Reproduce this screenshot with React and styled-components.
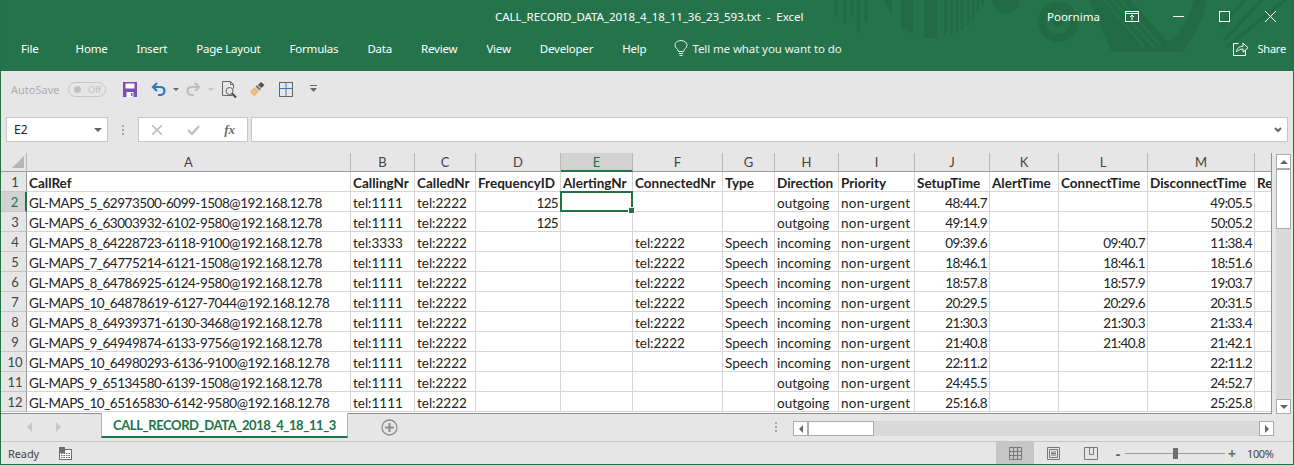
import React from 'react'
import styled, { createGlobalStyle } from 'styled-components'

const GREEN = '#217346'
const BANNER = '#25734a'
const DECOR = '#226a42'
const UI_FONT = '"Noto Sans", "Open Sans", sans-serif'
const CELL_FONT = 'Lato, "Noto Sans", sans-serif'

const GlobalStyle = createGlobalStyle`
  html, body { margin: 0; padding: 0; background: #e6e6e6; }
  * { box-sizing: border-box; }
`

const Window = styled.div`
  position: relative;
  width: 1294px;
  height: 465px;
  overflow: hidden;
  display: flex;
  flex-direction: column;
  background: #e6e6e6;
  border-left: 1px solid ${GREEN};
  border-right: 1px solid ${GREEN};
  border-bottom: 1px solid ${GREEN};
  font-family: ${UI_FONT};
  color: #222;
`

const Banner = styled.div`
  position: relative;
  height: 71px;
  flex: none;
  margin-left: -1px;
  margin-right: -1px;
  background: ${BANNER};
  color: #fff;
  display: flex;
  flex-direction: column;
`

const Decor = styled.svg`
  position: absolute;
  top: 0;
  left: 0;
`

const TitleRow = styled.div`
  position: relative;
  height: 33px;
  flex: none;
  display: flex;
  align-items: center;
`

const Title = styled.div`
  position: absolute;
  left: 495px;
  top: 8px;
  font-size: 11.5px;
  line-height: 18px;
  white-space: pre;
  letter-spacing: -0.05px;
`

const Account = styled.div`
  flex: none;
  margin-left: 1047px;
  width: 62px;
  font-size: 11.5px;
`

const WinButton = styled.div`
  flex: none;
  width: 46px;
  display: flex;
  justify-content: center;
`

const TabRow = styled.div`
  position: relative;
  display: flex;
  align-items: center;
  height: 30px;
  padding-left: 21px;
  font-size: 11.5px;
  letter-spacing: -0.2px;
`

const RibbonTab = styled.div`
  margin-right: ${p => (p.$first ? 37 : 29)}px;
  white-space: nowrap;
`

const TellMe = styled.div`
  display: flex;
  align-items: center;
  gap: 4px;
  margin-left: -1px;
  white-space: nowrap;
  opacity: 0.92;
  letter-spacing: -0.1px;
`

const Share = styled.div`
  margin-left: auto;
  margin-right: 8px;
  display: flex;
  align-items: center;
  gap: 8px;
  font-size: 11px;
`

const Qat = styled.div`
  height: 36px;
  flex: none;
  display: flex;
  align-items: center;
  padding-left: 10px;
`

const AutoSave = styled.span`
  font-size: 11px;
  color: #adadad;
  width: 57px;
`

const Toggle = styled.div`
  width: 38px;
  height: 15px;
  border: 1px solid #c6c6c6;
  border-radius: 8px;
  display: flex;
  align-items: center;
  padding-left: 5px;
  gap: 7px;
  font-size: 9px;
  color: #c0c0c0;
`

const ToggleDot = styled.i`
  display: block;
  width: 7px;
  height: 7px;
  border-radius: 50%;
  background: #c0c0c0;
`

const QatIcon = styled.div`
  display: flex;
  align-items: center;
  width: ${p => p.$w}px;
  margin-left: ${p => p.$ml || 0}px;
`

const FormulaRow = styled.div`
  height: 46px;
  flex: none;
  display: flex;
  padding: 10px 5px 11px 5px;
`

const NameBox = styled.div`
  width: 102px;
  background: #fff;
  border: 1px solid #c6c6c6;
  display: flex;
  align-items: center;
  justify-content: space-between;
  padding: 0 5px 0 7px;
  font-size: 12px;
`

const Grip = styled.div`
  width: 30px;
  display: flex;
  flex-direction: column;
  align-items: center;
  justify-content: center;
  gap: 2px;
`

const GripDot = styled.i`
  display: block;
  width: 2px;
  height: 2px;
  background: #a6a6a6;
`

const FxBox = styled.div`
  width: 110px;
  background: #fff;
  border: 1px solid #c6c6c6;
  display: flex;
  align-items: center;
  justify-content: space-between;
  padding: 0 12px 0 13px;
`

const FxGlyph = styled.span`
  font-family: "Liberation Serif", serif;
  font-style: italic;
  font-weight: 700;
  font-size: 13px;
  color: #6e6e6e;
`

const FormulaInput = styled.div`
  flex: 1;
  margin-left: 3px;
  background: #fff;
  border: 1px solid #c6c6c6;
  display: flex;
  align-items: center;
  justify-content: flex-end;
  padding-right: 5px;
`

const SheetArea = styled.div`
  height: 261px;
  flex: none;
  display: flex;
`

const Grid = styled.div`
  width: 1271px;
  flex: none;
  display: grid;
  grid-template-columns: 26px 324px 64px 61px 85px 72px 90px 52px 64px 76px 75px 69px 89px 107px 18px;
  grid-auto-rows: 20px;
  align-content: start;
  border-bottom: 1px solid #8f8f8f;
  border-right: 1px solid #8f8f8f;
  overflow: hidden;
  background: #fff;
`

const Corner = styled.div`
  position: relative;
  height: 19px;
  background: #e6e6e6;
  border-bottom: 1px solid #9b9b9b;
  border-right: 1px solid #b8b8b8;
`

const CornerMark = styled.i`
  position: absolute;
  right: 2px;
  bottom: 3px;
  border-style: solid;
  border-width: 0 0 12px 12px;
  border-color: transparent transparent #b5b5b5 transparent;
`

const ColHead = styled.div`
  height: 19px;
  background: ${p => (p.$active ? '#d2d2d2' : '#e6e6e6')};
  border-bottom: ${p => (p.$active ? `2px solid ${GREEN}` : '1px solid #9b9b9b')};
  border-right: 1px solid #b8b8b8;
  color: ${p => (p.$active ? GREEN : '#444')};
  font-size: 13px;
  font-family: ${CELL_FONT};
  display: flex;
  align-items: center;
  justify-content: center;
`

const RowHead = styled.div`
  height: 20px;
  margin-top: -1px;
  background: ${p => (p.$active ? '#d2d2d2' : '#e6e6e6')};
  border-bottom: 1px solid #c6c6c6;
  border-right: ${p => (p.$active ? `2px solid ${GREEN}` : '1px solid #9b9b9b')};
  color: ${p => (p.$active ? GREEN : '#444')};
  font-family: ${CELL_FONT};
  font-size: 13px;
  display: flex;
  align-items: center;
  justify-content: center;
  padding-left: 3px;
`

const Cell = styled.div`
  position: relative;
  z-index: ${p => (p.$raised ? 1 : 'auto')};
  height: 20px;
  margin-top: -1px;
  border-right: 1px solid #d6d6d6;
  border-bottom: 1px solid #d6d6d6;
  font-family: ${CELL_FONT};
  font-size: 13.5px;
  font-weight: ${p => (p.$bold ? 700 : 400)};
  letter-spacing: ${p => p.$fit || 0}px;
  color: #222;
  line-height: 22px;
  padding: 0 2px;
  white-space: nowrap;
  text-align: ${p => (p.$right ? 'right' : 'left')};
  overflow: ${p => (p.$bold ? 'hidden' : 'visible')};
`

const Selection = styled.div`
  position: absolute;
  left: -1px;
  top: -1px;
  right: -1px;
  bottom: -1px;
  border: 2px solid ${GREEN};
`

const Handle = styled.i`
  position: absolute;
  right: -4px;
  bottom: -4px;
  width: 7px;
  height: 7px;
  background: ${GREEN};
  border: 1px solid #fff;
`

const VScroll = styled.div`
  width: 15px;
  margin-left: 4px;
  margin-top: 1px;
  display: flex;
  flex-direction: column;
  background: #d9d9d9;
`

const ScrollButton = styled.div`
  width: ${p => p.$w}px;
  height: ${p => p.$h}px;
  flex: none;
  background: #fff;
  border: 1px solid #ababab;
  display: flex;
  align-items: center;
  justify-content: center;
`

const VThumb = styled.div`
  height: 60px;
  flex: none;
  background: #fff;
  border: 1px solid #ababab;
`

const Track = styled.div`
  flex: 1;
`

const TabBar = styled.div`
  height: 28px;
  flex: none;
  display: flex;
  align-items: flex-start;
  border-bottom: 1px solid #c6c6c6;
`

const NavArrows = styled.div`
  flex: none;
  width: 100px;
  height: 26px;
  display: flex;
  align-items: center;
  padding-left: 26px;
  gap: 24px;
`

const SheetTab = styled.div`
  flex: none;
  width: 247px;
  height: 25px;
  background: #fff;
  border-left: 1px solid #b0b0b0;
  border-right: 1px solid #b0b0b0;
  border-bottom: 2px solid ${GREEN};
  margin-top: -1px;
  display: flex;
  align-items: center;
  justify-content: center;
  color: ${GREEN};
  font-family: ${CELL_FONT};
  font-weight: 700;
  font-size: 13px;
  letter-spacing: -0.4px;
  white-space: nowrap;
`

const AddSheet = styled.div`
  flex: none;
  width: 82px;
  height: 26px;
  display: flex;
  align-items: center;
  justify-content: center;
`

const Splitter = styled.div`
  flex: none;
  width: 363px;
  height: 26px;
  display: flex;
  align-items: center;
  justify-content: flex-end;
  padding-right: 16px;
`

const SplitDots = styled.div`
  display: flex;
  flex-direction: column;
  gap: 2px;
`

const HScroll = styled.div`
  flex: none;
  width: 481px;
  height: 15px;
  margin-top: 7px;
  background: #d9d9d9;
  display: flex;
`

const HThumb = styled.div`
  width: 66px;
  background: #fff;
  border: 1px solid #ababab;
`

const StatusBar = styled.div`
  flex: 1;
  display: flex;
  align-items: stretch;
  font-size: 11px;
  color: #444;
`

const Ready = styled.div`
  width: 58px;
  padding-left: 7px;
  display: flex;
  align-items: center;
  letter-spacing: -0.1px;
`

const StatusIcon = styled.div`
  flex: none;
  display: flex;
  align-items: center;
  width: ${p => p.$w}px;
  justify-content: ${p => (p.$center ? 'center' : 'flex-start')};
  background: ${p => (p.$active ? '#c6c6c6' : 'transparent')};
`

const ZoomSlider = styled.div`
  position: relative;
  width: 100px;
  height: 1px;
  align-self: center;
  background: #9c9c9c;
  margin: 0 1px;
`

const ZoomThumb = styled.i`
  position: absolute;
  left: 48px;
  top: -5px;
  width: 5px;
  height: 11px;
  background: #6f6f6f;
`

const ZoomSign = styled.div`
  flex: none;
  width: 12px;
  margin-left: ${p => p.$ml || 0}px;
  display: flex;
  align-items: center;
  justify-content: center;
  font-size: 14px;
  font-weight: 700;
  color: #666;
`

const ZoomValue = styled.div`
  margin-left: 9px;
  display: flex;
  align-items: center;
  letter-spacing: -0.4px;
`

const Arrow = ({ dir = 'down', color = '#666', size = 4 }) => {
  const pts = {
    down: `0,0 ${size * 2},0 ${size},${size}`,
    up: `0,${size} ${size * 2},${size} ${size},0`,
    left: `${size},0 ${size},${size * 2} 0,${size}`,
    right: `0,0 0,${size * 2} ${size},${size}`
  }[dir]
  const horizontal = dir === 'left' || dir === 'right'
  return (
    <svg width={horizontal ? size : size * 2} height={horizontal ? size * 2 : size}>
      <polygon points={pts} fill={color} />
    </svg>
  )
}

const BannerDecor = () => (
  <Decor width="1294" height="71" fill="none" stroke={DECOR}>
    <path d="M836 0v17M844.5 0v24M852 0v17M858.5 0v33M866 0v22" strokeWidth="3" />
    <path d="M883 0h9v15z" fill={DECOR} stroke="none" />
    <path d="M901 0h12v34l-12-6z" fill={DECOR} stroke="none" />
    <path d="M924 0h13v38h-13z" fill={DECOR} stroke="none" />
    <path d="M945.5 0v36M951.5 0v35M957 0v32M962 0v29M968 0v26M973 0v22M978 0v13M982.5 0v6" strokeWidth="2.4" />
    <path d="M992 0a13.5 13.5 0 0 0 27 0z" fill={DECOR} stroke="none" />
    <circle cx="1058" cy="22" r="16" strokeWidth="8" />
    <circle cx="1058" cy="22" r="5" fill={DECOR} stroke="none" />
    <path d="M1089 0l23 52h70q18-22 25-52h-13q-6 28-26 42L1130 0z" fill={DECOR} stroke="none" />
    <path d="M1104 0l40 47M1112 0l42 47M1121 0l40 46" strokeWidth="2" stroke={BANNER} />
    <path d="M1245 0l-23 25M1262 0l-38 40M1285 0l-58 47" strokeWidth="3.5" />
  </Decor>
)

const RestoreIcon = () => (
  <svg width="14" height="11" stroke="#fff" fill="none">
    <rect x="0.5" y="0.5" width="13" height="10" />
    <path d="M0 2.5h14M7 9.5V4M5 6l2-2 2 2" />
  </svg>
)

const Bulb = () => (
  <svg width="14" height="17" viewBox="0 0 14 17" fill="none" stroke="#fff">
    <path d="M4.5 11.5C4.2 9 1 8 1 5.2 1 2.4 3.6.6 7 .6s6 1.8 6 4.6c0 2.8-3.2 3.8-3.5 6.3z" />
    <path d="M5 13.5h4M5.5 15.5h3" />
  </svg>
)

const ShareIcon = () => (
  <svg width="16" height="15" viewBox="0 0 16 15" fill="none" stroke="#fff">
    <path d="M5.5 2.5H.5v12h12v-5" />
    <path d="M3.5 11c.3-4 3-5.7 6.5-5.7V2l5 4.8-5 4.4V8C7.5 8 5 9 3.5 11z" />
  </svg>
)

const SaveIcon = () => (
  <svg width="14" height="15" viewBox="0 0 14 15">
    <path d="M0 0h14v15H0z" fill="#7a4fae" />
    <path d="M2.5 1.5h9v5h-9z" fill="#fff" />
    <path d="M3.5 10h7v5h-7z" fill="#fff" />
    <path d="M8 11h1.5v3H8z" fill="#7a4fae" />
  </svg>
)

const UndoIcon = ({ color, flip }) => (
  <svg width="15" height="14" viewBox="0 0 15 14" fill="none" stroke={color} strokeWidth="2.2"
    style={flip ? { transform: 'scaleX(-1)' } : undefined}>
    <path d="M6 1L2 5l4 4" />
    <path d="M2.5 5H9c3 0 4.5 1.8 4.5 4S11.5 13 9 13H7" />
  </svg>
)

const PreviewIcon = () => (
  <svg width="16" height="17" viewBox="0 0 16 17" fill="none" stroke="#666">
    <path d="M10 14.5H.5V.5h8l3 3v4" />
    <path d="M8.5.5v3h3" />
    <circle cx="7.5" cy="10" r="3.5" />
    <path d="M10 12.5l4 4" strokeWidth="2" stroke="#444" />
  </svg>
)

const BrushIcon = () => (
  <svg width="16" height="14" viewBox="0 0 16 14">
    <path d="M1 9l5-4 4 4-4 5c-2-.3-4-2.3-5-5z" fill="#eabd78" />
    <path d="M6.5 4.5l4 4 1.5-1.5-4-4z" fill="#777" />
    <path d="M9 3l3-3 3.5 3-3 3z" fill="#555" />
  </svg>
)

const BordersIcon = () => (
  <svg width="14" height="15" viewBox="0 0 14 15" fill="none">
    <rect x="0.5" y="0.5" width="13" height="14" stroke="#666" />
    <path d="M7 .5v14" stroke="#777" />
    <path d="M0.5 6.5h13" stroke="#2b7cd3" />
  </svg>
)

const CustomizeIcon = () => (
  <svg width="7" height="8" viewBox="0 0 7 8">
    <path d="M0 .5h7" stroke="#666" />
    <path d="M0 3h7L3.5 7z" fill="#666" />
  </svg>
)

const CancelIcon = () => (
  <svg width="10" height="10" stroke="#bdbdbd" strokeWidth="1.6">
    <path d="M0 0l10 10M10 0L0 10" />
  </svg>
)

const CheckIcon = () => (
  <svg width="13" height="10" fill="none" stroke="#bdbdbd" strokeWidth="2.2">
    <path d="M1 5l4 4 7-8" />
  </svg>
)

const Chevron = () => (
  <svg width="8" height="6" fill="none" stroke="#666" strokeWidth="2">
    <path d="M1 1l3 3 3-3" />
  </svg>
)

const PlusCircle = () => (
  <svg width="17" height="17" fill="none" stroke="#8c8c8c">
    <circle cx="8.5" cy="8.5" r="7.5" strokeWidth="1.3" />
    <path d="M8.5 4v9M4 8.5h9" strokeWidth="2" />
  </svg>
)

const MacroIcon = () => (
  <svg width="13" height="13" viewBox="0 0 13 13">
    <rect x="0.5" y="2.5" width="12" height="10" fill="#fff" stroke="#6e6e6e" />
    <rect x="0" y="0" width="6" height="6" fill="#6e6e6e" />
    <path d="M2 6.5h9M2 8.5h9M2 10.5h9" stroke="#6e6e6e" strokeDasharray="1.5 1" />
  </svg>
)

const NormalView = () => (
  <svg width="13" height="13" stroke="#777" fill="none">
    <path d="M.5.5h12v12H.5zM4.5.5v12M8.5.5v12M.5 4.5h12M.5 8.5h12" />
  </svg>
)

const PageView = () => (
  <svg width="13" height="13" stroke="#777" fill="none">
    <path d="M.5.5h12v12H.5z" />
    <path d="M2.5 2.5h8v8h-8zM4 5h5M4 6.5h5M4 8h5" />
  </svg>
)

const BreakView = () => (
  <svg width="14" height="13" stroke="#777" fill="none">
    <path d="M.5.5h13v12H.5zM5.5.5v7h4V.5" />
  </svg>
)

const columns = ['A', 'B', 'C', 'D', 'E', 'F', 'G', 'H', 'I', 'J', 'K', 'L', 'M', '']

const header = ['CallRef', 'CallingNr', 'CalledNr', 'FrequencyID', 'AlertingNr', 'ConnectedNr', 'Type', 'Direction', 'Priority', 'SetupTime', 'AlertTime', 'ConnectTime', 'DisconnectTime', 'Re']

// Lato's digits run wider than the sheet font's, so number columns get tightened
const TIME_FIT = -0.55

// ref, calling, freq, connected, type, direction, setup, connect, disconnect
const records = [
  ['GL-MAPS_5_62973500-6099-1508', 'tel:1111', '125', '', '', 'outgoing', '48:44.7', '', '49:05.5'],
  ['GL-MAPS_6_63003932-6102-9580', 'tel:1111', '125', '', '', 'outgoing', '49:14.9', '', '50:05.2'],
  ['GL-MAPS_8_64228723-6118-9100', 'tel:3333', '', 'tel:2222', 'Speech', 'incoming', '09:39.6', '09:40.7', '11:38.4'],
  ['GL-MAPS_7_64775214-6121-1508', 'tel:1111', '', 'tel:2222', 'Speech', 'incoming', '18:46.1', '18:46.1', '18:51.6'],
  ['GL-MAPS_8_64786925-6124-9580', 'tel:1111', '', 'tel:2222', 'Speech', 'incoming', '18:57.8', '18:57.9', '19:03.7'],
  ['GL-MAPS_10_64878619-6127-7044', 'tel:1111', '', 'tel:2222', 'Speech', 'incoming', '20:29.5', '20:29.6', '20:31.5'],
  ['GL-MAPS_8_64939371-6130-3468', 'tel:1111', '', 'tel:2222', 'Speech', 'incoming', '21:30.3', '21:30.3', '21:33.4'],
  ['GL-MAPS_9_64949874-6133-9756', 'tel:1111', '', 'tel:2222', 'Speech', 'incoming', '21:40.8', '21:40.8', '21:42.1'],
  ['GL-MAPS_10_64980293-6136-9100', 'tel:1111', '', '', 'Speech', 'incoming', '22:11.2', '', '22:11.2'],
  ['GL-MAPS_9_65134580-6139-1508', 'tel:1111', '', '', '', 'outgoing', '24:45.5', '', '24:52.7'],
  ['GL-MAPS_10_65165830-6142-9580', 'tel:1111', '', '', '', 'outgoing', '25:16.8', '', '25:25.8']
]

const ribbonTabs = ['Home', 'Insert', 'Page Layout', 'Formulas', 'Data', 'Review', 'View', 'Developer', 'Help']

const renderRecord = (r, i) => {
  const row = i + 2
  const cells = [
    { v: r[0] + '@192.168.12.78', fit: -0.47 }, { v: r[1] }, { v: 'tel:2222' },
    { v: r[2], right: true, fit: -0.7 },
    { v: '', selected: i === 0 }, { v: r[3] }, { v: r[4] }, { v: r[5] },
    { v: 'non-urgent', fit: 0.3 },
    { v: r[6], right: true, fit: TIME_FIT }, { v: '' },
    { v: r[7], right: true, fit: TIME_FIT }, { v: r[8], right: true, fit: TIME_FIT }, { v: '' }
  ]
  return (
    <React.Fragment key={row}>
      <RowHead $active={row === 2}>{row}</RowHead>
      {cells.map((c, k) => (
        <Cell key={k} $right={c.right} $fit={c.fit} $raised={c.selected}>
          {c.v}
          {c.selected && <Selection><Handle /></Selection>}
        </Cell>
      ))}
    </React.Fragment>
  )
}

export default function App() {
  return (
    <Window>
      <GlobalStyle />
      <Banner>
        <BannerDecor />
        <TitleRow>
          <Title>CALL_RECORD_DATA_2018_4_18_11_36_23_593.txt  -  Excel</Title>
          <Account>Poornima</Account>
          <WinButton><RestoreIcon /></WinButton>
          <WinButton>
            <svg width="11" height="11" stroke="#fff"><path d="M0 5.5h11" /></svg>
          </WinButton>
          <WinButton>
            <svg width="11" height="11" stroke="#fff" fill="none"><rect x=".5" y=".5" width="10" height="10" /></svg>
          </WinButton>
          <WinButton>
            <svg width="11" height="11" stroke="#fff"><path d="M0 0l11 11M11 0L0 11" /></svg>
          </WinButton>
        </TitleRow>
        <TabRow>
          <RibbonTab $first>File</RibbonTab>
          {ribbonTabs.map(t => <RibbonTab key={t}>{t}</RibbonTab>)}
          <TellMe><Bulb />Tell me what you want to do</TellMe>
          <Share><ShareIcon />Share</Share>
        </TabRow>
      </Banner>

      <Qat>
        <AutoSave>AutoSave</AutoSave>
        <Toggle><ToggleDot />Off</Toggle>
        <QatIcon $w={28} $ml={17}><SaveIcon /></QatIcon>
        <QatIcon $w={22}><UndoIcon color="#2f78c4" /></QatIcon>
        <QatIcon $w={13}><Arrow size={3} /></QatIcon>
        <QatIcon $w={22}><UndoIcon color="#bdbdbd" flip /></QatIcon>
        <QatIcon $w={14}><Arrow size={3} color="#c6c6c6" /></QatIcon>
        <QatIcon $w={27}><PreviewIcon /></QatIcon>
        <QatIcon $w={30}><BrushIcon /></QatIcon>
        <QatIcon $w={31}><BordersIcon /></QatIcon>
        <QatIcon $w={10}><CustomizeIcon /></QatIcon>
      </Qat>

      <FormulaRow>
        <NameBox>E2<Arrow size={4} /></NameBox>
        <Grip><GripDot /><GripDot /><GripDot /></Grip>
        <FxBox>
          <CancelIcon />
          <CheckIcon />
          <FxGlyph>fx</FxGlyph>
        </FxBox>
        <FormulaInput><Chevron /></FormulaInput>
      </FormulaRow>

      <SheetArea>
        <Grid>
          <Corner><CornerMark /></Corner>
          {columns.map((c, i) => <ColHead key={i} $active={c === 'E'}>{c}</ColHead>)}
          <RowHead>1</RowHead>
          {header.map(h => <Cell key={h} $bold>{h}</Cell>)}
          {records.map(renderRecord)}
        </Grid>
        <VScroll>
          <ScrollButton $w={15} $h={15}><Arrow dir="up" size={4} /></ScrollButton>
          <VThumb />
          <Track />
          <ScrollButton $w={15} $h={15}><Arrow dir="down" size={4} /></ScrollButton>
        </VScroll>
      </SheetArea>

      <TabBar>
        <NavArrows>
          <Arrow dir="left" size={5} color="#c6c6c6" />
          <Arrow dir="right" size={5} color="#c6c6c6" />
        </NavArrows>
        <SheetTab>CALL_RECORD_DATA_2018_4_18_11_3</SheetTab>
        <AddSheet><PlusCircle /></AddSheet>
        <Splitter><SplitDots><GripDot /><GripDot /><GripDot /></SplitDots></Splitter>
        <HScroll>
          <ScrollButton $w={15} $h={15}><Arrow dir="left" size={4} /></ScrollButton>
          <HThumb />
          <Track />
          <ScrollButton $w={15} $h={15}><Arrow dir="right" size={4} /></ScrollButton>
        </HScroll>
      </TabBar>

      <StatusBar>
        <Ready>Ready</Ready>
        <StatusIcon $w={937}><MacroIcon /></StatusIcon>
        <StatusIcon $w={38} $center $active><NormalView /></StatusIcon>
        <StatusIcon $w={38} $center><PageView /></StatusIcon>
        <StatusIcon $w={38} $center><BreakView /></StatusIcon>
        <ZoomSign $ml={2}>-</ZoomSign>
        <ZoomSlider><ZoomThumb /></ZoomSlider>
        <ZoomSign>+</ZoomSign>
        <ZoomValue>100%</ZoomValue>
      </StatusBar>
    </Window>
  )
}
